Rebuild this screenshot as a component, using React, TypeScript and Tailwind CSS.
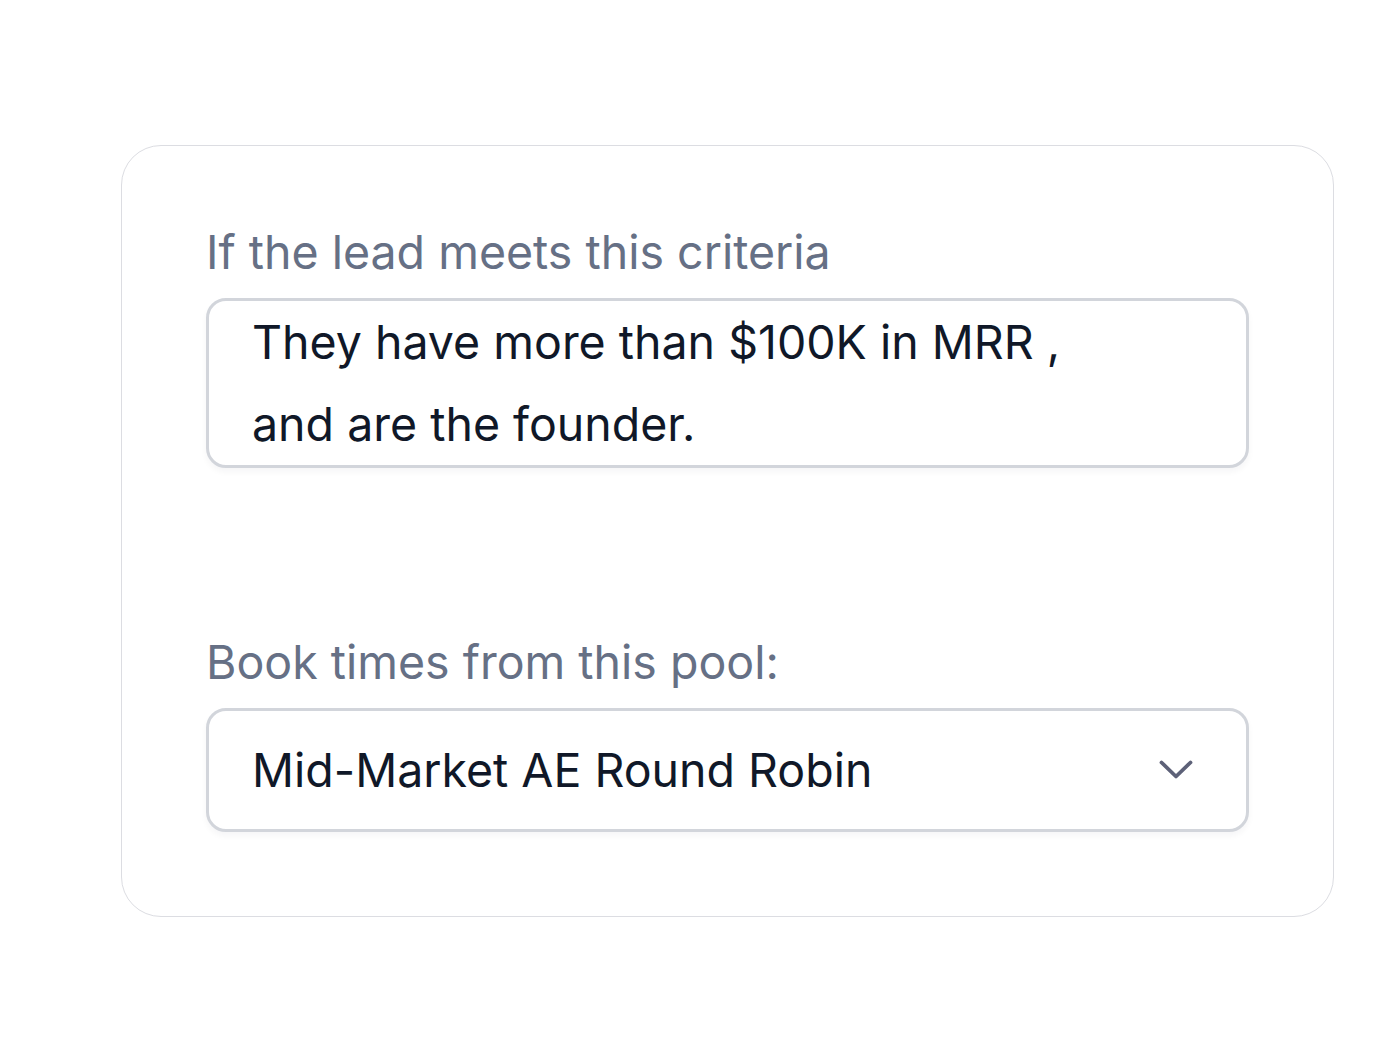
import React from "react";

const fontStack = { fontFamily: "Inter, 'Noto Sans', sans-serif" };

const Chevron = () => (
  <svg width="34" height="22" viewBox="0 0 34 22" fill="none">
    <path
      d="M2.5 3.5 L17 17.5 L31.5 3.5"
      stroke="#5d6178"
      strokeWidth="3.8"
      strokeLinecap="round"
      strokeLinejoin="round"
    />
  </svg>
);

export default function App() {
  return (
    <div className="min-h-[1061px] w-full bg-white" style={fontStack}>
      <div className="pt-[145px] pl-[121px] pr-[44px]">
        <div className="rounded-[40px] border border-[#dcdde2] bg-white pl-[84px] pr-[84px] pt-[78px] pb-[84px]">
          <div className="text-[46.5px] leading-[56px] text-[#667085]">
            If the lead meets this criteria
          </div>
          <div className="mt-[18px] rounded-[20px] border-[3px] border-[#d2d5db] bg-white pl-[43px] pr-6 shadow-[0_4px_6px_rgba(16,24,40,0.04)]">
            <div className="text-[46.5px] leading-[82px] text-[#101828]">
              They have more than $100K in MRR ,
              <br />
              and are the founder.
            </div>
          </div>

          <div className="mt-[166px] text-[46.5px] leading-[56px] text-[#667085]">
            Book times from this pool:
          </div>
          <div className="mt-[18px] flex h-[124px] items-center justify-between rounded-[20px] border-[3px] border-[#d2d5db] bg-white pl-[43px] pr-[53px] shadow-[0_4px_6px_rgba(16,24,40,0.04)]">
            <span className="text-[46.5px] leading-none text-[#101828]">
              Mid-Market AE Round Robin
            </span>
            <Chevron />
          </div>
        </div>
      </div>
    </div>
  );
}
